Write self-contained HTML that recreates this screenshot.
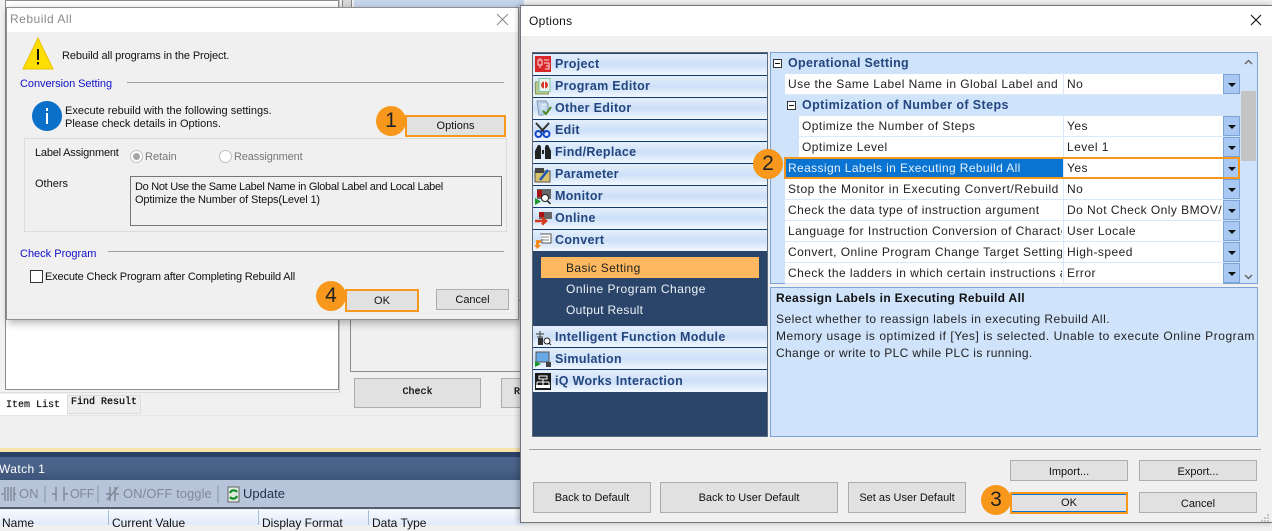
<!DOCTYPE html>
<html><head><meta charset="utf-8"><style>
html,body{margin:0;padding:0}
body{width:1272px;height:525px;position:relative;overflow:hidden;background:#f0f0f0;font-family:"Liberation Sans",sans-serif;font-size:12px;color:#111}
div,svg{position:absolute;box-sizing:border-box}
.t{white-space:nowrap;line-height:16px;height:16px}
.btn{background:#e1e1e1;border:1px solid #adadad;text-align:center;font-size:11px;color:#111}
.c{width:30px;height:30px;border-radius:50%;background:#f7981d;text-align:center;line-height:30px;font-size:21px;color:#222}
.nav{left:0;width:234px;height:22px;background:linear-gradient(#e4effc,#cde0f8 50%,#f2f7fe);border-bottom:1px solid #12386e}
.nl{position:absolute;left:22px;top:1px;font-weight:bold;font-size:12.5px;color:#24467e;line-height:18px;letter-spacing:.3px;white-space:nowrap}
.row{background:#fff;height:21px;border-bottom:1px solid #dbe8f8}
.lab,.val{height:20px;line-height:20px;overflow:hidden;white-space:nowrap;font-size:12px;letter-spacing:.45px;color:#222}
.dd{left:1223px;width:17px;height:20px;background:#a9c9f3;border:1px solid #7ba3d8}
.dd:after{content:"";position:absolute;left:4px;top:8px;border-left:4px solid transparent;border-right:4px solid transparent;border-top:4px solid #111}
</style></head><body>

<!-- background app -->
<div style="left:0;top:0;width:340px;height:393px;background:#f2f2f2;border-right:1px solid #c5c5c5;border-bottom:1px solid #ddd"></div>
<div style="left:5px;top:0;width:334px;height:390px;background:#fff;border:1px solid #8c8c8c"></div>
<div style="left:342px;top:0;width:10px;height:8px;background:#d8d8d8;border-left:1px solid #888;border-right:1px solid #888"></div>
<div style="left:354px;top:0;width:170px;height:8px;background:#c5d4ea"></div>
<div style="left:350px;top:300px;width:175px;height:72px;background:#f0f0f0;border:1px solid #8c8c8c"></div>
<div class="btn" style="left:354px;top:378px;width:127px;height:30px;font:10px/27px 'Liberation Mono',monospace;-webkit-text-stroke:.3px #111">Check</div>
<div class="btn" style="left:501px;top:378px;width:40px;height:30px;font:10px/27px 'Liberation Mono',monospace;-webkit-text-stroke:.3px #111;text-align:left;padding-left:12px">R</div>
<div style="left:0;top:394px;width:67px;height:21px;background:#fff"></div>
<div class="t" style="left:6px;top:396px;font:10px/16px 'Liberation Mono',monospace;-webkit-text-stroke:.2px #111;padding-top:2px;height:18px">Item List</div>
<div style="left:67px;top:395px;width:74px;height:19px;background:#eee;border:1px solid #ddd"></div>
<div class="t" style="left:71px;top:394px;font:10px/16px 'Liberation Mono',monospace;-webkit-text-stroke:.3px #111;padding-top:1px;height:17px">Find Result</div>
<div style="left:0;top:415px;width:525px;height:1px;background:#e6e6e6"></div>
<div style="left:0;top:448px;width:525px;height:4px;background:#f6e3ac"></div>
<div style="left:0;top:452px;width:525px;height:5px;background:#2a4166"></div>
<div style="left:0;top:457px;width:525px;height:23px;background:linear-gradient(#4c658d,#4a6188 50%,#3c5479)"></div>
<div class="t" style="left:-1px;top:461px;color:#fff;font-size:12px;letter-spacing:.4px">Watch 1</div>
<div style="left:0;top:480px;width:525px;height:29px;background:#b7c4d9;border-bottom:2px solid #55606f"></div>
<div class="t" style="left:19px;top:486px;font-size:13px;color:#808a98">ON</div>
<div class="t" style="left:70px;top:486px;font-size:12.500px;color:#808a98;letter-spacing:-.3px">OFF</div>
<div class="t" style="left:123px;top:486px;font-size:13px;color:#808a98;letter-spacing:.05px">ON/OFF toggle</div>
<div class="t" style="left:243px;top:486px;font-size:13px;color:#25324a">Update</div>
<svg style="left:0;top:484px" width="240" height="22"><g stroke="#808a98" fill="none" stroke-width="1.500">
<path d="M1 10h3M5 3v14M8 3v14M11 3v14M14 3v14M14 10h2M52 10h4M56 3v14M64 3v14M64 10h4M106 10h4M110 3v14M115 3v14M115 10h4M107 16l11-13"/></g>
<path d="M45 2v17M98 2v17M218 2v17" stroke="#8995a8"/>
<rect x="228" y="3" width="11" height="15" fill="#dfe9e0" stroke="#666"/><path d="M230 9a4 4 0 0 1 7-1M237 12a4 4 0 0 1-7 1" fill="none" stroke="#0a8a1d" stroke-width="2"/></svg>
<div style="left:0;top:510px;width:525px;height:15px;background:linear-gradient(#f7fafe,#dfeafa)"></div>
<div class="t" style="left:2px;top:515px;font-size:12px">Name</div>
<div class="t" style="left:112px;top:515px;font-size:12px">Current Value</div>
<div class="t" style="left:262px;top:515px;font-size:12px">Display Format</div>
<div class="t" style="left:372px;top:515px;font-size:12px">Data Type</div>
<div style="left:108px;top:510px;width:1px;height:15px;background:#a9bcd6"></div>
<div style="left:258px;top:510px;width:1px;height:15px;background:#a9bcd6"></div>
<div style="left:368px;top:510px;width:1px;height:15px;background:#a9bcd6"></div>

<!-- Rebuild All dialog -->
<div style="left:6px;top:7px;width:513px;height:313px;background:#f0f0f0;border:1px solid #8f8f8f;box-shadow:2px 3px 8px rgba(0,0,0,.3)"></div>
<div style="left:7px;top:8px;width:511px;height:24px;background:#fff"></div>
<div class="t" style="left:10px;top:11px;color:#8a8a8a;font-size:12px;letter-spacing:.5px">Rebuild All</div>
<svg style="left:496px;top:13px" width="13" height="13"><path d="M1 1l11 11M12 1L1 12" stroke="#888" fill="none"/></svg>
<svg style="left:21px;top:36px" width="34" height="34"><path d="M17 2L32 33H2Z" fill="#fede00" stroke="#e9c300"/><rect x="16" y="13" width="2" height="11" fill="#111"/><rect x="16" y="26" width="2" height="2.500" fill="#111"/></svg>
<div class="t" style="left:62px;top:48px;font-size:11px;letter-spacing:-.11px">Rebuild all programs in the Project.</div>
<div class="t" style="left:20px;top:76px;font-size:11px;color:#1010c8;letter-spacing:-.05px">Conversion Setting</div>
<div style="left:127px;top:82px;width:377px;height:1px;background:#a0a0a0"></div>
<div style="left:32px;top:101px;width:30px;height:30px;border-radius:50%;background:#0a70c9"></div>
<div style="left:46px;top:108px;width:2px;height:3px;background:#fff"></div>
<div style="left:46px;top:113px;width:2px;height:11px;background:#fff"></div>
<div class="t" style="left:65px;top:103px;font-size:11px">Execute rebuild with the following settings.</div>
<div class="t" style="left:65px;top:116px;font-size:11px">Please check details in Options.</div>
<div style="left:24px;top:138px;width:483px;height:94px;border:1px solid #dcdcdc"></div>
<div class="t" style="left:35px;top:145px;font-size:11px;letter-spacing:-.2px">Label Assignment</div>
<div style="left:130px;top:150px;width:13px;height:13px;border-radius:50%;background:#fff;border:1px solid #c0c0c0"></div>
<div style="left:133px;top:153px;width:7px;height:7px;border-radius:50%;background:#a5a5a5"></div>
<div class="t" style="left:145px;top:149px;font-size:11px;color:#777">Retain</div>
<div style="left:219px;top:150px;width:13px;height:13px;border-radius:50%;background:#fff;border:1px solid #c0c0c0"></div>
<div class="t" style="left:234px;top:149px;font-size:11px;color:#777;letter-spacing:-.15px">Reassignment</div>
<div class="t" style="left:35px;top:176px;font-size:11px">Others</div>
<div style="left:130px;top:176px;width:372px;height:50px;border:1px solid #777"></div>
<div class="t" style="left:135px;top:179px;font-size:11px;letter-spacing:-.3px">Do Not Use the Same Label Name in Global Label and Local Label</div>
<div class="t" style="left:135px;top:192px;font-size:11px;letter-spacing:-.14px">Optimize the Number of Steps(Level 1)</div>
<div class="t" style="left:20px;top:246px;font-size:11px;color:#1010c8">Check Program</div>
<div style="left:108px;top:251px;width:396px;height:1px;background:#a0a0a0"></div>
<div style="left:30px;top:270px;width:13px;height:13px;background:#fff;border:1px solid #333"></div>
<div class="t" style="left:45px;top:269px;font-size:11px;letter-spacing:-.16px">Execute Check Program after Completing Rebuild All</div>
<div class="btn" style="left:405px;top:115px;width:101px;height:22px;border:2px solid #f7981d;line-height:18px">Options</div>
<div class="btn" style="left:345px;top:289px;width:74px;height:23px;border:2px solid #f7981d;line-height:21px">OK</div>
<div class="btn" style="left:436px;top:289px;width:73px;height:21px;line-height:21px">Cancel</div>
<div class="c" style="left:376px;top:106px">1</div>
<div class="c" style="left:316px;top:281px">4</div>

<!-- Options dialog -->
<div style="left:520px;top:5px;width:753px;height:518px;background:#f0f0f0;border:1px solid #6f7680;box-shadow:-2px 0 5px rgba(0,0,0,.25)"></div>
<div style="left:521px;top:6px;width:751px;height:30px;background:#fff"></div>
<div class="t" style="left:529px;top:13px;font-size:12px;letter-spacing:.3px">Options</div>
<svg style="left:1250px;top:14px" width="13" height="13"><path d="M1 1l10 10M11 1L1 11" stroke="#111" stroke-width="1.100" fill="none"/></svg>

<!-- left nav -->
<div style="left:532px;top:52px;width:236px;height:385px;background:#2a4569;border:1px solid #5d6a7a">
<div class="nav" style="top:1px"><div class="nl">Project</div></div>
<div class="nav" style="top:23px"><div class="nl">Program Editor</div></div>
<div class="nav" style="top:45px"><div class="nl">Other Editor</div></div>
<div class="nav" style="top:67px"><div class="nl">Edit</div></div>
<div class="nav" style="top:89px"><div class="nl">Find/Replace</div></div>
<div class="nav" style="top:111px"><div class="nl">Parameter</div></div>
<div class="nav" style="top:133px"><div class="nl">Monitor</div></div>
<div class="nav" style="top:155px"><div class="nl">Online</div></div>
<div class="nav" style="top:177px;height:21px;border-bottom:0"><div class="nl">Convert</div></div>
<div style="left:8px;top:204px;width:218px;height:21px;background:#fdb860"></div>
<div class="t" style="left:33px;top:207px;font-size:12px;letter-spacing:.35px;color:#222">Basic Setting</div>
<div class="t" style="left:33px;top:228px;font-size:12px;letter-spacing:.5px;color:#eef2f8">Online Program Change</div>
<div class="t" style="left:33px;top:249px;font-size:12px;letter-spacing:.3px;color:#eef2f8">Output Result</div>
<div class="nav" style="top:273px"><div class="nl" style="top:2px">Intelligent Function Module</div></div>
<div class="nav" style="top:295px"><div class="nl" style="top:2px">Simulation</div></div>
<div class="nav" style="top:317px;border-bottom:0"><div class="nl" style="top:2px">iQ Works Interaction</div></div>
</div>
<svg style="left:533px;top:53px" width="22" height="340">
<rect x="2" y="3" width="16" height="16" fill="#d8262a"/><path d="M5 7h4v5H5zM7 5v2M7 12v3M11 7h5M11 10h5v6h-4M13 13h3" stroke="#fbdcdc" fill="none"/>
<rect x="2.500" y="29" width="13" height="12" fill="#b9c98c" stroke="#8a9a5a"/><rect x="6" y="25.500" width="11" height="13" fill="#e4f5ee" stroke="#7ec5a8"/><circle cx="11.500" cy="32" r="3.500" fill="#d63a2c"/><path d="M11.500 28v8" stroke="#fff"/>
<path d="M4 48h9l2 3v8l-5 3H6z" fill="#bcd3ee" stroke="#8a99ad"/><path d="M8 52h5M8 55h4" stroke="#fff"/><path d="M10 58l3 3 5-7" stroke="#4d8a22" stroke-width="2" fill="none"/>
<path d="M3 70l9 10M16 70L7 80" stroke="#333" stroke-width="2"/><circle cx="5.500" cy="81" r="3" fill="none" stroke="#1447c8" stroke-width="2"/><circle cx="13.500" cy="81" r="3" fill="none" stroke="#1447c8" stroke-width="2"/>
<path d="M2 106v-8l2-4 1-2h2l1 2v12zM9 97h2v4H9zM12 106V94l1-2h2l1 2 2 4v8z" fill="#222"/>
<rect x="2" y="118" width="15" height="11" fill="#d7c26a" stroke="#555"/><rect x="2" y="115" width="9" height="5" fill="#444"/><path d="M7 127l8-10" stroke="#1c56b8" stroke-width="2.500"/>
<rect x="4" y="136" width="14" height="10" fill="#666"/><rect x="4" y="137" width="5" height="7" fill="#a11"/><circle cx="12" cy="145" r="3.500" fill="#fff" stroke="#222"/><path d="M14.500 148l3 3" stroke="#222" stroke-width="1.500"/><path d="M2 152v-7l6 3.500z" fill="#1a9a2a"/>
<rect x="6" y="159" width="13" height="7" fill="#666"/><rect x="6" y="159" width="5" height="5" fill="#a11"/><path d="M2 168h10M9 164.500l4 3.500-4 3.500" stroke="#d63a1c" stroke-width="2.500" fill="none"/>
<path d="M7 181h11v9H9v-4" stroke="#555" fill="#fff"/><path d="M8 184h8M8 187h8" stroke="#888"/><path d="M3 187h5v3h-2v2h2l-3.500 4L1 192h2z" fill="#f08a1c"/>
<path d="M7 278v14M3 281h8M4 284h6" stroke="#555" stroke-width="1.200"/><rect x="5" y="285" width="5" height="7" fill="#333"/><circle cx="14" cy="288" r="3" fill="#fff" stroke="#222"/><path d="M16 290l2 2" stroke="#222"/>
<rect x="3" y="299" width="13" height="10" fill="#6aa9e8" stroke="#555"/><path d="M2 314v-6l6 3z" fill="#1a9a2a"/><rect x="13" y="309" width="5" height="5" fill="#444"/>
<rect x="2" y="320" width="16" height="17" fill="#1a1a1a"/><path d="M6 323h8v3H6zM4 329h12M10 326v3M4 329v3M10 329v3M16 329v3" stroke="#fff" fill="none"/><rect x="3" y="332" width="14" height="3" fill="#fff"/>
</svg>

<!-- property grid -->
<div style="left:770px;top:52px;width:488px;height:232px;background:#cfe3fb;border:1px solid #7ba3d8"></div>
<div style="left:773px;top:59px;width:9px;height:9px;background:#fff;border:1px solid #333"></div><div style="left:775px;top:63px;width:5px;height:1px;background:#111"></div>
<div class="t" style="left:788px;top:55px;font-weight:bold;font-size:12.500px;letter-spacing:.3px;color:#24467e">Operational Setting</div>
<div style="left:787px;top:101px;width:9px;height:9px;background:#fff;border:1px solid #333"></div><div style="left:789px;top:105px;width:5px;height:1px;background:#111"></div>
<div class="t" style="left:802px;top:97px;font-weight:bold;font-size:12.500px;letter-spacing:.4px;color:#24467e">Optimization of Number of Steps</div>

<div class="row" style="left:785px;top:74px;width:438px"></div>
<div class="lab" style="left:788px;top:74px;width:274px">Use the Same Label Name in Global Label and</div>
<div class="row" style="left:799px;top:116px;width:424px"></div>
<div class="lab" style="left:802px;top:116px;width:260px">Optimize the Number of Steps</div>
<div class="row" style="left:799px;top:137px;width:424px"></div>
<div class="lab" style="left:802px;top:137px;width:260px">Optimize Level</div>
<div class="row" style="left:785px;top:158px;width:278px;background:#0a74d2"></div>
<div class="row" style="left:1063px;top:158px;width:160px"></div>
<div class="lab" style="left:788px;top:158px;width:274px;color:#e6f1fc;letter-spacing:.38px">Reassign Labels in Executing Rebuild All</div>
<div class="row" style="left:785px;top:179px;width:438px"></div>
<div class="lab" style="left:788px;top:179px;width:274px;letter-spacing:.55px">Stop the Monitor in Executing Convert/Rebuild</div>
<div class="row" style="left:785px;top:200px;width:438px"></div>
<div class="lab" style="left:788px;top:200px;width:274px">Check the data type of instruction argument</div>
<div class="row" style="left:785px;top:221px;width:438px"></div>
<div class="lab" style="left:788px;top:221px;width:274px">Language for Instruction Conversion of Character</div>
<div class="row" style="left:785px;top:242px;width:438px"></div>
<div class="lab" style="left:788px;top:242px;width:274px">Convert, Online Program Change Target Setting</div>
<div class="row" style="left:785px;top:263px;width:438px"></div>
<div class="lab" style="left:788px;top:263px;width:274px">Check the ladders in which certain instructions are</div>
<div style="left:1063px;top:74px;width:1px;height:21px;background:#dce8f7"></div>
<div style="left:1063px;top:116px;width:1px;height:167px;background:#dce8f7"></div>
<div class="val" style="left:1067px;top:74px;width:156px">No</div>
<div class="val" style="left:1067px;top:116px;width:156px">Yes</div>
<div class="val" style="left:1067px;top:137px;width:156px">Level 1</div>
<div class="val" style="left:1067px;top:158px;width:156px">Yes</div>
<div class="val" style="left:1067px;top:179px;width:156px">No</div>
<div class="val" style="left:1067px;top:200px;width:156px">Do Not Check Only BMOV/FMOV</div>
<div class="val" style="left:1067px;top:221px;width:156px">User Locale</div>
<div class="val" style="left:1067px;top:242px;width:156px">High-speed</div>
<div class="val" style="left:1067px;top:263px;width:156px">Error</div>
<div class="dd" style="top:74px"></div><div class="dd" style="top:116px"></div><div class="dd" style="top:137px"></div><div class="dd" style="top:158px"></div><div class="dd" style="top:179px"></div><div class="dd" style="top:200px"></div><div class="dd" style="top:221px"></div><div class="dd" style="top:242px"></div><div class="dd" style="top:263px"></div>
<div style="left:1241px;top:91px;width:15px;height:70px;background:#c4c4c4"></div>
<svg style="left:1243px;top:58px" width="11" height="224"><path d="M2 6l3.500-3.500L9 6M2 217l3.500 3.500L9 217" stroke="#666" stroke-width="1.500" fill="none"/></svg>
<div style="left:784px;top:157px;width:456px;height:22px;border:2px solid #f7981d"></div>

<!-- description -->
<div style="left:770px;top:287px;width:488px;height:150px;background:#cfe3fb;border:1px solid #7ba3d8"></div>
<div class="t" style="left:776px;top:290px;font-weight:bold;font-size:12px;letter-spacing:.35px">Reassign Labels in Executing Rebuild All</div>
<div class="t" style="left:776px;top:311px;font-size:12px;letter-spacing:.46px;color:#222">Select whether to reassign labels in executing Rebuild All.</div>
<div class="t" style="left:776px;top:328px;font-size:12px;letter-spacing:.54px;color:#222">Memory usage is optimized if [Yes] is selected. Unable to execute Online Program</div>
<div class="t" style="left:776px;top:345px;font-size:12px;letter-spacing:.36px;color:#222">Change or write to PLC while PLC is running.</div>

<!-- footer -->
<div style="left:529px;top:449px;width:732px;height:1px;background:#a0a0a0"></div>
<div class="btn" style="left:1010px;top:460px;width:118px;height:21px;line-height:23px">Import...</div>
<div class="btn" style="left:1139px;top:460px;width:118px;height:21px;line-height:23px">Export...</div>
<div class="btn" style="left:533px;top:482px;width:118px;height:31px;line-height:31px">Back to Default</div>
<div class="btn" style="left:660px;top:482px;width:178px;height:31px;line-height:31px">Back to User Default</div>
<div class="btn" style="left:848px;top:482px;width:118px;height:31px;line-height:31px">Set as User Default</div>
<div class="btn" style="left:1010px;top:492px;width:118px;height:22px;border:2px solid #f7981d;box-shadow:inset 0 1px 0 #0a74d2,inset 0 -1px 0 #0a74d2;line-height:19px">OK</div>
<div class="btn" style="left:1139px;top:492px;width:118px;height:21px;line-height:23px">Cancel</div>
<svg style="left:1261px;top:513px" width="10" height="9"><path d="M6 1h2v2H6zM3 4h2v2H3zM6 4h2v2H6zM0 7h2v2H0zM3 7h2v2H3zM6 7h2v2H6z" fill="#c4c4c4"/></svg>
<div class="c" style="left:981px;top:485px">3</div>
<div class="c" style="left:753px;top:149px">2</div>
</body></html>
